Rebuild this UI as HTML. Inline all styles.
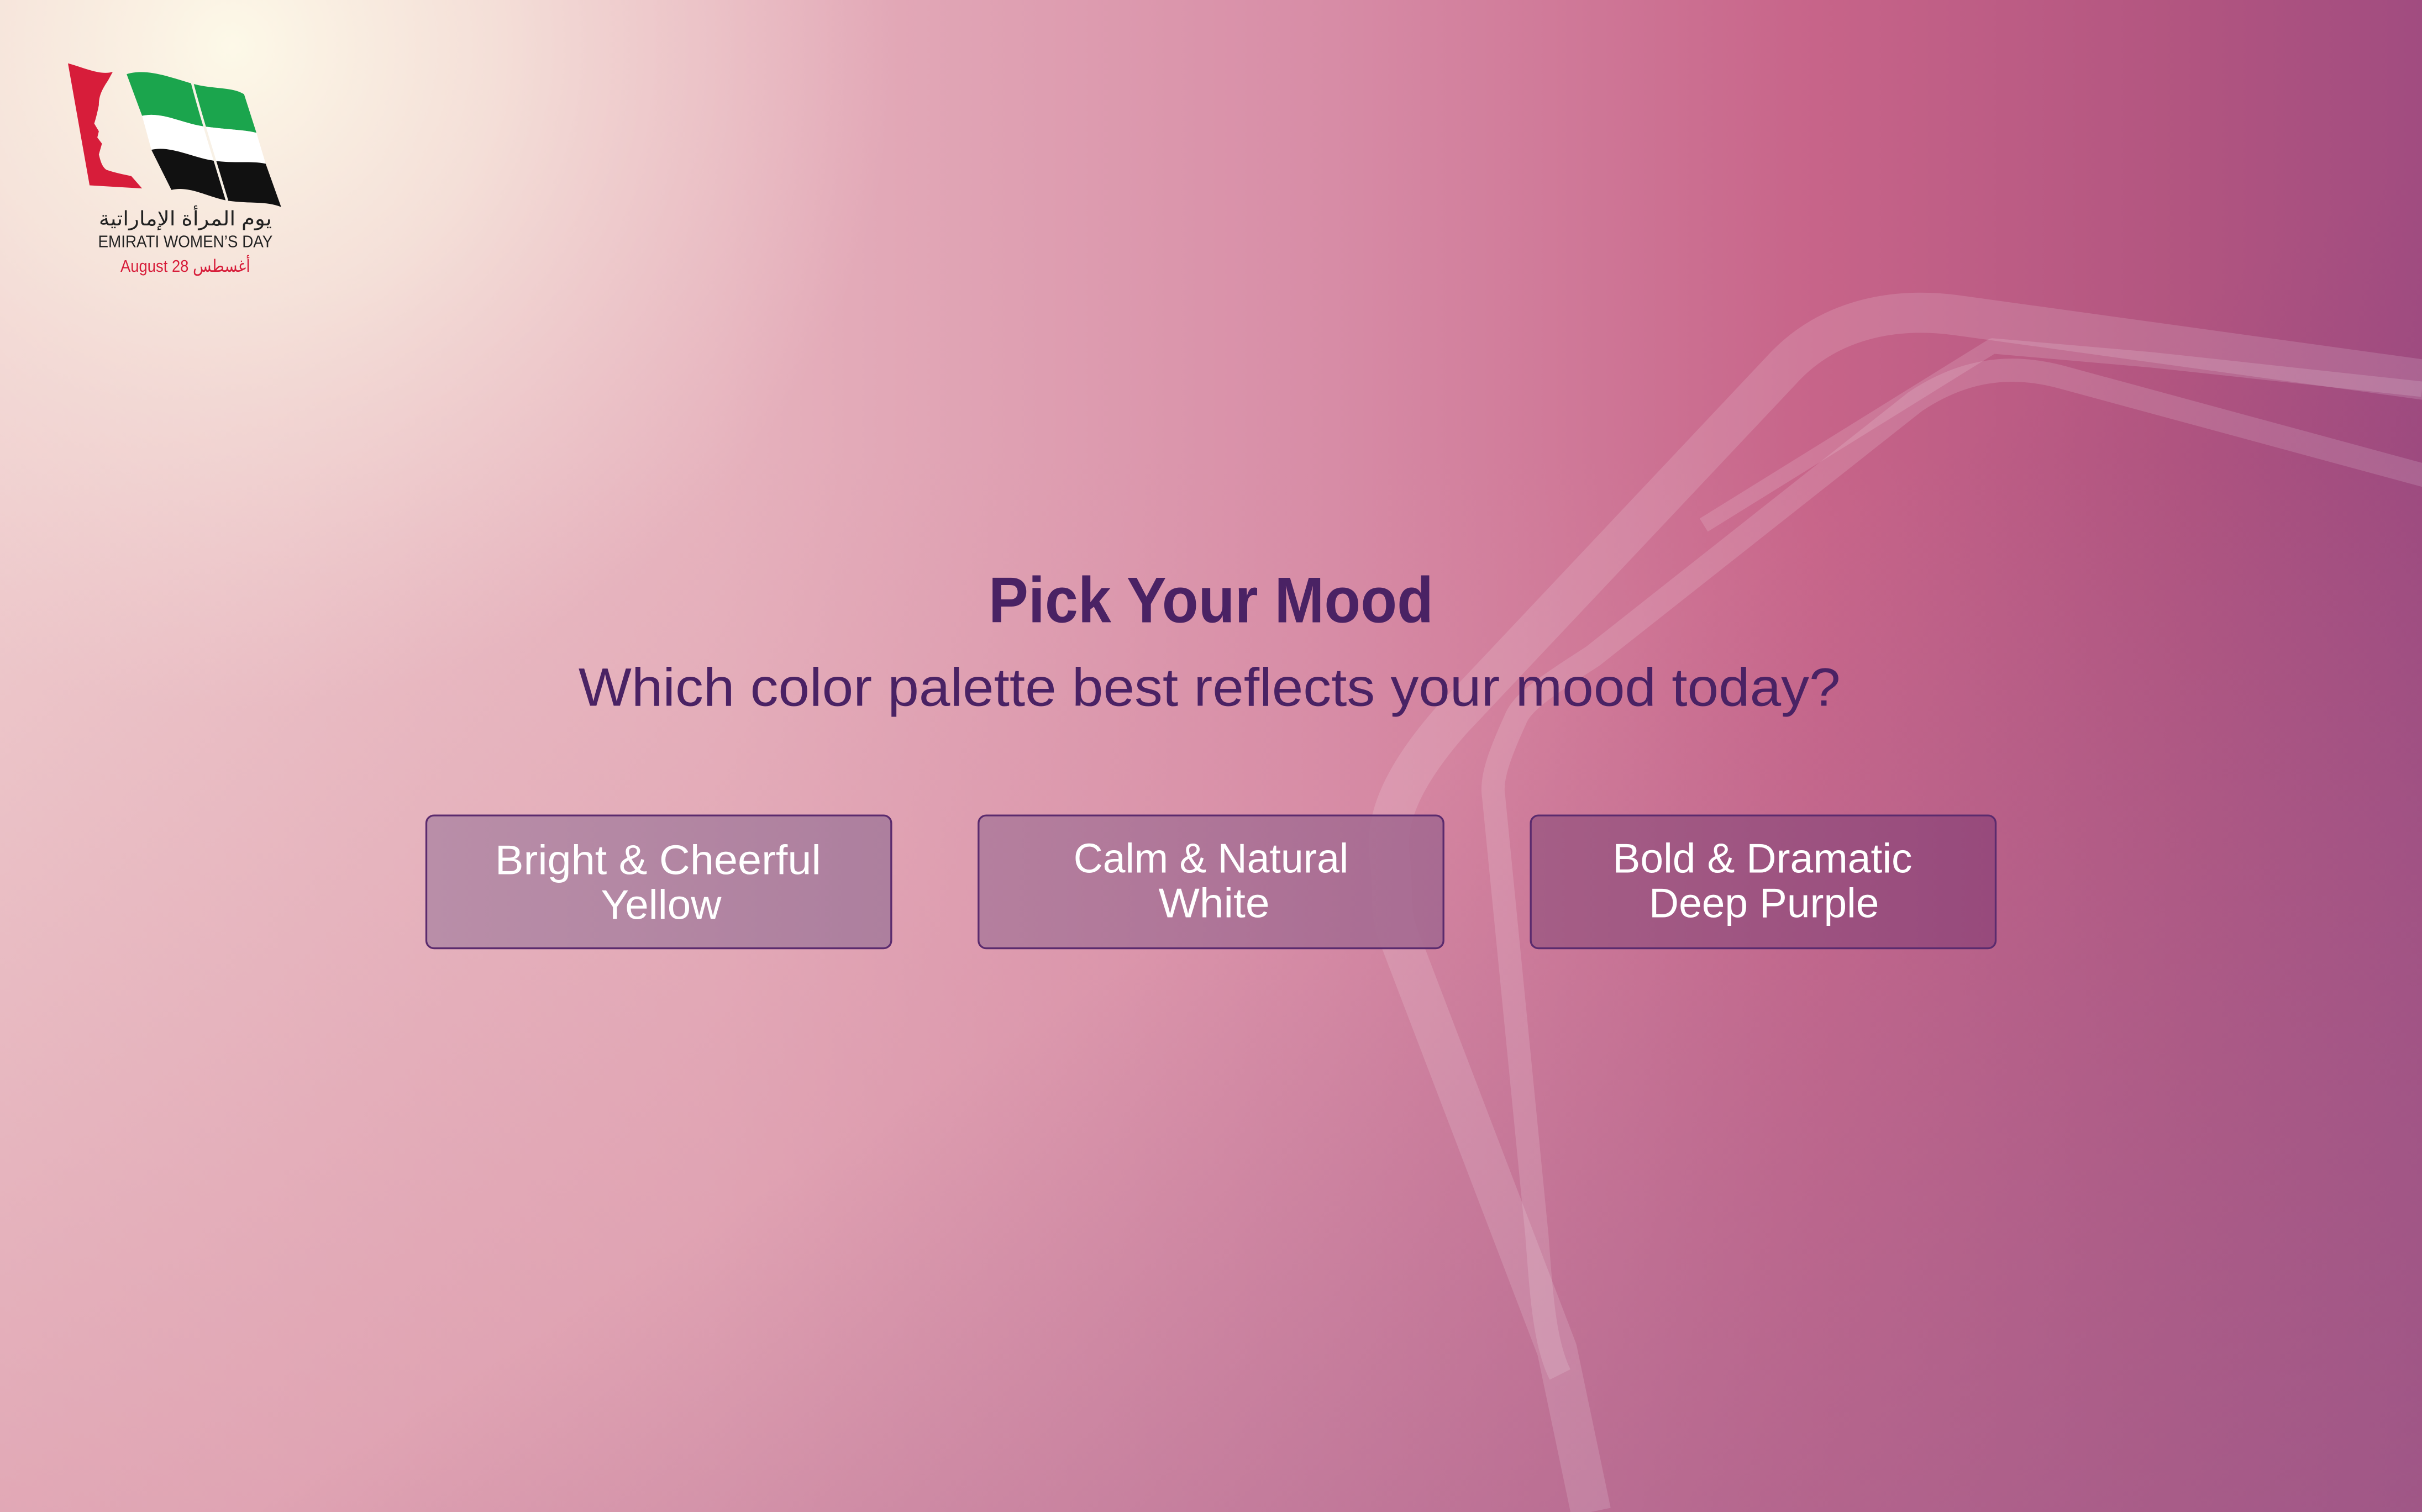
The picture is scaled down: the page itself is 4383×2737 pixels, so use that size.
<!DOCTYPE html>
<html><head><meta charset="utf-8"><style>
html,body{margin:0;padding:0;width:4383px;height:2737px;overflow:hidden}
svg{display:block}
</style></head><body>
<svg width="4383" height="2737" viewBox="0 0 1568 979" preserveAspectRatio="none" xmlns="http://www.w3.org/2000/svg">
<defs>
<linearGradient id="bg" x1="0" y1="0" x2="1" y2="0">
<stop offset="0" stop-color="#efcdce"/>
<stop offset="0.3" stop-color="#e6b2bd"/>
<stop offset="0.55" stop-color="#d78ca6"/>
<stop offset="0.75" stop-color="#c76489"/>
<stop offset="0.9" stop-color="#b25580"/>
<stop offset="1" stop-color="#a14c80"/>
</linearGradient>
<linearGradient id="vert" x1="0" y1="0" x2="0" y2="1">
<stop offset="0.3" stop-color="#d88ca4" stop-opacity="0"/>
<stop offset="1" stop-color="#d68aa2" stop-opacity="0.55"/>
</linearGradient>
<radialGradient id="cream" cx="150" cy="30" r="430" gradientUnits="userSpaceOnUse">
<stop offset="0" stop-color="#fdf9e8" stop-opacity="1"/>
<stop offset="0.4" stop-color="#f8ebdf" stop-opacity="0.75"/>
<stop offset="1" stop-color="#f2d4d4" stop-opacity="0"/>
</radialGradient>
<linearGradient id="dark" x1="0" y1="0" x2="1" y2="1">
<stop offset="0.55" stop-color="#7a3a78" stop-opacity="0"/>
<stop offset="1" stop-color="#7a3a78" stop-opacity="0.45"/>
</linearGradient>
<linearGradient id="b1" x1="0" y1="0" x2="1" y2="0"><stop offset="0" stop-color="#b98ea8"/><stop offset="1" stop-color="#ad7f9e"/></linearGradient>
<linearGradient id="b2" x1="0" y1="0" x2="1" y2="0"><stop offset="0" stop-color="#b07c9c"/><stop offset="1" stop-color="#a46890"/></linearGradient>
<linearGradient id="b3" x1="0" y1="0" x2="1" y2="0"><stop offset="0" stop-color="#a55e86"/><stop offset="1" stop-color="#974a7c"/></linearGradient>
</defs>
<rect width="1568" height="979" fill="url(#bg)"/>
<rect width="1568" height="979" fill="url(#vert)"/>
<rect width="1568" height="979" fill="url(#dark)"/>
<rect width="1568" height="979" fill="url(#cream)"/>

<g fill="none" stroke="#ffffff" stroke-opacity="0.14" stroke-linejoin="round" stroke-linecap="butt">
<path d="M1570,246 L1266,204 C1220,198 1180,210 1153,240 L940,466 C910,500 895,530 900,557 C902,580 900,590 904,602 L1008,874 L1030,979" stroke-width="26"/>
<path d="M1570,308 L1334,244 C1300,235 1270,240 1240,260 L1031,425 C1000,445 985,455 981,466 C970,490 965,505 967,516 L995,800 C998,840 1000,870 1010,890" stroke-width="15"/>
<path d="M1103,340 L1290,224 L1393,233 L1568,252" stroke-width="10"/>
</g>

<!-- logo -->
<g>
<path d="M44,41 C55,44 65,49 73,46.5 L70,52 C66,58 64,62 64,68 C63,73 62,77 61,80 L64,85 L63,89 L66,93 L64,100 C65,104 66,108 69,110 C75,112 80,113 85,114 L92,122 L58,120 Z" fill="#d71d3a"/>
<path d="M82,48 C95,44 110,50 124,54 C138,58 150,56 158,61 L166,86 C158,84 148,84 133,82 C118,80 105,72 92,75 Z" fill="#1ba54d"/>
<path d="M92,75 C105,72 118,80 133,82 C148,84 158,84 166,86 L172,106 C162,104 152,106 138,104 C125,102 110,94 98,97 Z" fill="#ffffff"/>
<path d="M98,97 C110,94 125,102 138,104 C152,106 162,104 172,106 L182,134 C172,130 162,132 148,130 C135,128 123,120 111,123 Z" fill="#111111"/>
<path d="M124,52 C130,75 138,100 147,130" stroke="#f8f1e6" stroke-width="1.6" fill="none"/>
<text x="120" y="146" text-anchor="middle" font-family="'Liberation Sans','DejaVu Sans',sans-serif" font-size="13" fill="#222" textLength="112" lengthAdjust="spacingAndGlyphs">يوم المرأة الإماراتية</text>
<text x="120" y="160" text-anchor="middle" font-family="'Liberation Sans',sans-serif" font-size="11" fill="#222" textLength="113" lengthAdjust="spacingAndGlyphs">EMIRATI WOMEN’S DAY</text>
<text x="120" y="176" text-anchor="middle" font-family="'Liberation Sans','DejaVu Sans',sans-serif" font-size="11" fill="#d71d3a" textLength="84" lengthAdjust="spacingAndGlyphs">August 28 أغسطس</text>
</g>

<!-- headings -->
<text x="784" y="403" text-anchor="middle" font-family="'Liberation Sans',sans-serif" font-weight="bold" font-size="42" fill="#4a2264" textLength="288" lengthAdjust="spacingAndGlyphs">Pick Your Mood</text>
<text x="783" y="457" text-anchor="middle" font-family="'Liberation Sans',sans-serif" font-size="35" fill="#4a2264" textLength="817" lengthAdjust="spacingAndGlyphs">Which color palette best reflects your mood today?</text>

<!-- buttons -->
<g stroke="#5b2b6e" stroke-width="1.2">
<rect x="276" y="528" width="301" height="86" rx="5" fill="url(#b1)"/>
<rect x="633.5" y="528" width="301" height="86" rx="5" fill="url(#b2)" fill-opacity="0.9"/>
<rect x="991" y="528" width="301" height="86" rx="5" fill="url(#b3)"/>
</g>
<g font-family="'Liberation Sans',sans-serif" font-size="27" fill="#ffffff" text-anchor="middle">
<text x="426" y="566" textLength="211" lengthAdjust="spacingAndGlyphs">Bright &amp; Cheerful</text>
<text x="428" y="595" textLength="78" lengthAdjust="spacingAndGlyphs">Yellow</text>
<text x="784" y="565" textLength="178" lengthAdjust="spacingAndGlyphs">Calm &amp; Natural</text>
<text x="786" y="594" textLength="72" lengthAdjust="spacingAndGlyphs">White</text>
<text x="1141" y="565" textLength="194" lengthAdjust="spacingAndGlyphs">Bold &amp; Dramatic</text>
<text x="1142" y="594" textLength="149" lengthAdjust="spacingAndGlyphs">Deep Purple</text>
</g>
</svg>
</body></html>
